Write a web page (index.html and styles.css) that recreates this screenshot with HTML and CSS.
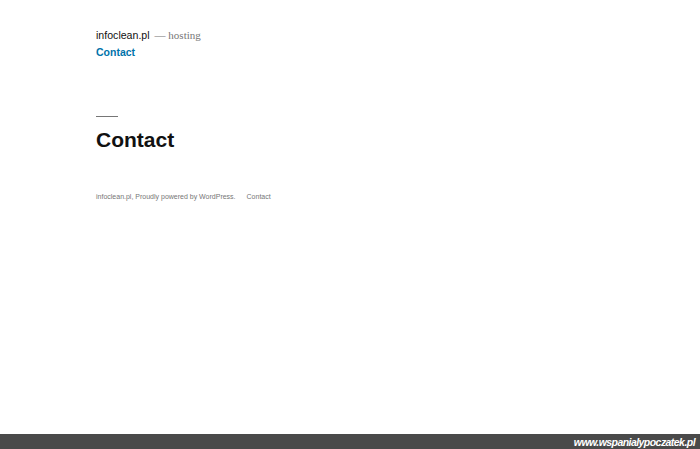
FILE: index.html
```html
<!DOCTYPE html>
<html lang="pl">
<head>
  <meta charset="UTF-8" />
  <meta name="viewport" content="width=device-width, initial-scale=1.0"/>
  <title>Contact – infoclean.pl</title>
  <link rel="stylesheet" href="styles.css">
</head>
<body>
  <div class="page">
    <header class="site-header">
      <div class="branding">
        <a class="site-title" href="#">infoclean.pl</a>
        <span class="site-description">— hosting</span>
      </div>
      <nav class="main-nav">
        <a href="#">Contact</a>
      </nav>
    </header>

    <main class="content">
      <div class="rule"></div>
      <h1 class="entry-title">Contact</h1>
    </main>

    <footer class="site-footer">
      <span>infoclean.pl, Proudly powered by WordPress.</span>
      <a href="#">Contact</a>
    </footer>

    <div class="host-bar">
      <span>www.wspanialypoczatek.pl</span>
    </div>
  </div>
</body>
</html>
```

FILE: styles.css
```css
body {
  margin: 0;
  padding: 0;
  background: #fff;
  color: #111;
  font-family: "Liberation Sans", Arial, sans-serif;
}
a {
  text-decoration: none;
}
.page {
  min-height: 100vh;
  display: flex;
  flex-direction: column;
}
.site-header {
  padding: 27px 0 0 96px;
}
.branding {
  display: flex;
  align-items: baseline;
  gap: 5px;
  line-height: 16px;
}
.site-title {
  color: #111;
  font-size: 10.6px;
}
.site-description {
  color: #767676;
  font-family: "Liberation Serif", "Times New Roman", serif;
  font-size: 11px;
}
.main-nav {
  margin-top: 0;
  line-height: 16px;
}
.main-nav a {
  color: #0073aa;
  font-size: 10.5px;
  font-weight: bold;
}
.content {
  padding: 56px 0 0 96px;
}
.rule {
  width: 22px;
  height: 1px;
  background: #767676;
}
.entry-title {
  margin: 10px 0 0 0;
  font-size: 21px;
  line-height: 26px;
  font-weight: bold;
  color: #111;
}
.site-footer {
  padding: 39px 0 0 96px;
  display: flex;
  gap: 11px;
  font-size: 7px;
  line-height: 10px;
  color: #767676;
}
.site-footer a {
  color: #767676;
}
.host-bar {
  margin-top: auto;
  height: 15px;
  background: #4a4a4a;
  display: flex;
  justify-content: flex-end;
  align-items: center;
  padding-right: 5px;
}
.host-bar span {
  color: #fff;
  font-size: 10.5px;
  letter-spacing: -0.55px;
  font-weight: bold;
  font-style: italic;
}
```
